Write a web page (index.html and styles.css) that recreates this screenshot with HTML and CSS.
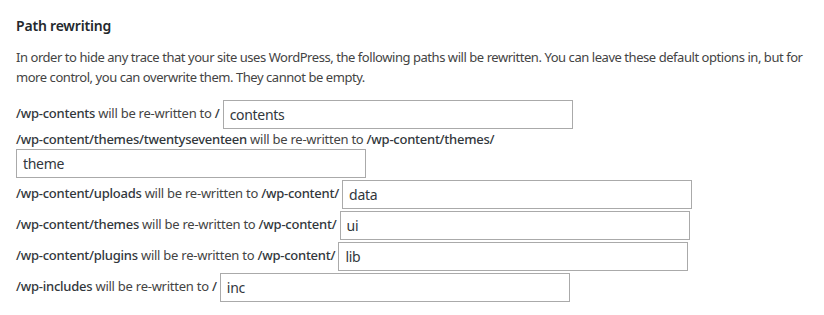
FILE: index.html
```html
<!DOCTYPE html>
<html lang="en">

<head>
  <meta charset="UTF-8">
  <meta name="viewport" content="width=device-width, initial-scale=1.0">
  <title>Path rewriting</title>
  <link rel="stylesheet" href="styles.css">
</head>

<body>
  <div class="section">
    <h3 class="section-title">Path rewriting</h3>
    <p class="intro">In order to hide any trace that your site uses WordPress, the following paths will be rewritten. You can leave these default options in, but for more control, you can overwrite them. They cannot be empty.</p>

    <div class="rewrite-row">
      <label for="new-content"><strong>/wp-contents</strong> will be re-written to <strong>/</strong></label>
      <input type="text" id="new-content" name="new_content_path" value="contents">
    </div>

    <div class="rewrite-row">
      <label for="new-theme"><strong>/wp-content/themes/twentyseventeen</strong> will be re-written to <strong>/wp-content/themes/</strong></label>
      <input type="text" id="new-theme" name="new_theme_path" value="theme">
    </div>

    <div class="rewrite-row">
      <label for="new-uploads"><strong>/wp-content/uploads</strong> will be re-written to <strong>/wp-content/</strong></label>
      <input type="text" id="new-uploads" name="new_upload_path" value="data">
    </div>

    <div class="rewrite-row">
      <label for="new-themes"><strong>/wp-content/themes</strong> will be re-written to <strong>/wp-content/</strong></label>
      <input type="text" id="new-themes" name="new_style_path" value="ui">
    </div>

    <div class="rewrite-row">
      <label for="new-plugins"><strong>/wp-content/plugins</strong> will be re-written to <strong>/wp-content/</strong></label>
      <input type="text" id="new-plugins" name="new_plugin_path" value="lib">
    </div>

    <div class="rewrite-row">
      <label for="new-includes"><strong>/wp-includes</strong> will be re-written to <strong>/</strong></label>
      <input type="text" id="new-includes" name="new_include_path" value="inc">
    </div>
  </div>
</body>

</html>
```

FILE: styles.css
```css
body {
  margin: 0;
  font-family: "Noto Sans", sans-serif;
  font-size: 13px;
  color: #444;
  background: #fff;
}

.section {
  padding: 16px 6px 0 16px;
}

.section-title {
  margin: 0;
  font-size: 14px;
  font-weight: 600;
  line-height: 20px;
  color: #23282d;
  letter-spacing: -0.2px;
}

.intro {
  margin: 11px 0 12px;
  line-height: 20px;
  letter-spacing: -0.45px;
}

.rewrite-row {
  line-height: 18px;
  letter-spacing: -0.25px;
}

.rewrite-row strong {
  font-weight: 500;
  color: #32373c;
}

.rewrite-row input {
  box-sizing: border-box;
  width: 350px;
  height: 29px;
  margin: 1px 0;
  padding: 0 6px;
  border: 1px solid #aaa;
  font-family: inherit;
  font-size: 14px;
  letter-spacing: -0.3px;
  color: #32373c;
  vertical-align: middle;
}
```
